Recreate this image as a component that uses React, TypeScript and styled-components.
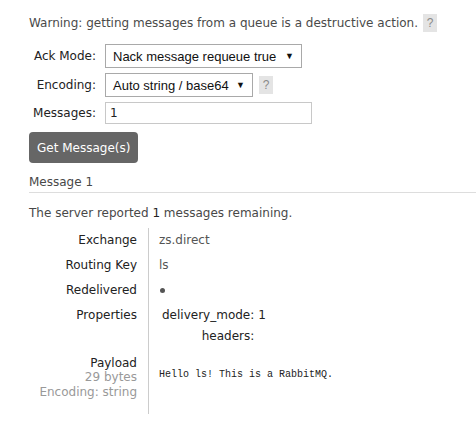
import styled, { createGlobalStyle } from 'styled-components';

const GlobalStyle = createGlobalStyle`
  body {
    margin: 0;
    background: #fff;
    font-family: "DejaVu Sans", Verdana, sans-serif;
    font-size: 12px;
    color: #484848;
  }
`;

const Page = styled.div`
  padding: 14px 0 0 29px;
`;

const Warning = styled.p`
  margin: 0 0 12px;
  display: flex;
  align-items: center;
  gap: 5px;
  color: #4a4a4a;
  height: 18px;
`;

const Help = styled.span`
  display: inline-flex;
  align-items: center;
  justify-content: center;
  width: 14px;
  height: 18px;
  background: #e4e4e4;
  color: #8a8a8a;
  font-family: "Liberation Sans", Arial, sans-serif;
  font-size: 12px;
`;

const Form = styled.div`
  display: grid;
  grid-template-columns: 67px auto;
  column-gap: 9px;
  row-gap: 5px;
  align-items: center;
  justify-items: start;
`;

const Label = styled.label`
  justify-self: end;
  white-space: nowrap;
  color: #222;
`;

const Field = styled.div`
  display: flex;
  align-items: center;
  gap: 6px;
`;

const Select = styled.div<{ $width: number }>`
  box-sizing: border-box;
  width: ${p => p.$width}px;
  height: 24px;
  border: 1px solid #a9a9a9;
  padding: 0 7px;
  display: flex;
  align-items: center;
  justify-content: space-between;
  font-family: "Liberation Sans", Arial, sans-serif;
  font-size: 13px;
  color: #111;
`;

const Arrow = styled.span`
  font-size: 9px;
`;

const Input = styled.div`
  box-sizing: border-box;
  width: 207px;
  height: 22px;
  border: 1px solid #c8c8c8;
  padding: 0 4px;
  display: flex;
  align-items: center;
  color: #222;
`;

const Button = styled.button`
  margin-top: 8px;
  border: 0;
  border-radius: 4px;
  background: #666;
  color: #fff;
  font-family: inherit;
  font-size: 12px;
  height: 31px;
  padding: 0 8px;
`;

const Heading = styled.h3`
  margin: 12px 0 0;
  padding-bottom: 3px;
  border-bottom: 1px solid #ddd;
  font-size: 12px;
  font-weight: normal;
  color: #484848;
`;

const Remaining = styled.p`
  margin: 13px 0 8px;
  b {
    font-weight: normal;
    color: #222;
  }
`;

const Details = styled.div`
  display: grid;
  grid-template-columns: 119px auto;
  width: max-content;
`;

const Key = styled.div<{ $tall?: boolean }>`
  text-align: right;
  padding: ${p => (p.$tall ? 7 : 5)}px 11px ${p => (p.$tall ? 14 : 6)}px 0;
  color: #222;
  line-height: 14px;
  white-space: nowrap;
`;

const Value = styled.div`
  border-left: 1px solid #ccc;
  padding: 5px 0 6px 10px;
  line-height: 14px;
  color: #555;
  display: flex;
  align-items: center;
`;

const Dot = styled.span`
  display: inline-block;
  width: 5px;
  height: 5px;
  border-radius: 50%;
  background: #555;
  margin-left: 1px;
`;

const Sub = styled.span`
  display: block;
  line-height: 15px;
  color: #999;
`;

const Props = styled.div`
  display: grid;
  grid-template-columns: auto auto;
  column-gap: 4px;
  row-gap: 7px;
  padding-left: 3px;
  color: #222;
  span:nth-child(odd) {
    text-align: right;
  }
`;

const Mono = styled.pre`
  margin: 0 0 12px;
  font-family: "Liberation Mono", "Courier New", monospace;
  font-size: 10px;
  color: #222;
`;

export default function App() {
  return (
    <Page>
      <GlobalStyle />
      <Warning>
        Warning: getting messages from a queue is a destructive action. <Help>?</Help>
      </Warning>
      <Form>
        <Label>Ack Mode:</Label>
        <Select $width={197}>Nack message requeue true <Arrow>▼</Arrow></Select>
        <Label>Encoding:</Label>
        <Field>
          <Select $width={148}>Auto string / base64 <Arrow>▼</Arrow></Select>
          <Help>?</Help>
        </Field>
        <Label>Messages:</Label>
        <Input>1</Input>
      </Form>
      <Button>Get Message(s)</Button>
      <Heading>Message 1</Heading>
      <Remaining>The server reported <b>1</b> messages remaining.</Remaining>
      <Details>
        <Key>Exchange</Key>
        <Value>zs.direct</Value>
        <Key>Routing Key</Key>
        <Value>ls</Value>
        <Key>Redelivered</Key>
        <Value><Dot /></Value>
        <Key>Properties</Key>
        <Value>
          <Props>
            <span>delivery_mode:</span><span>1</span>
            <span>headers:</span><span></span>
          </Props>
        </Value>
        <Key $tall>
          Payload
          <Sub>29 bytes</Sub>
          <Sub>Encoding: string</Sub>
        </Key>
        <Value>
          <Mono>Hello ls! This is a RabbitMQ.</Mono>
        </Value>
      </Details>
    </Page>
  );
}
